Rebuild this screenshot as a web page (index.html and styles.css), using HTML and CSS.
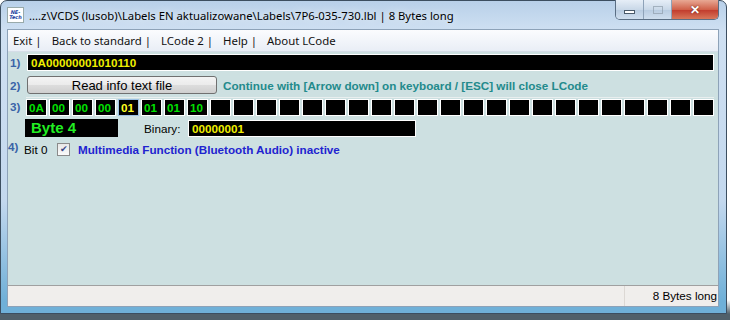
FILE: index.html
```html
<!DOCTYPE html>
<html lang="en">
<head>
    <meta charset="UTF-8">
    <title>LCode</title>
    <link rel="stylesheet" href="styles.css">
</head>
<body>
    <div class="window">
        <div class="titlebar">
            <div class="appicon"><span>NE-</span><span>Tech</span></div>
            <div class="title">....z\VCDS (lusob)\Labels EN aktualizowane\Labels\7P6-035-730.lbl | 8 Bytes long</div>
            <div class="captions">
                <div class="cap cap-min"><i></i></div>
                <div class="cap cap-max"><i></i></div>
                <div class="cap cap-close">&#x2715;</div>
            </div>
        </div>
        <div class="client">
            <div class="menubar">
                <span>Exit |</span>
                <span>Back to standard |</span>
                <span>LCode 2 |</span>
                <span>Help |</span>
                <span>About LCode</span>
            </div>
            <div class="content">
                <div class="row row1">
                    <span class="num">1)</span>
                    <div class="field wide">0A00000001010110</div>
                </div>
                <div class="row row2">
                    <span class="num">2)</span>
                    <button class="btn">Read info text file</button>
                    <span class="hint">Continue with [Arrow down] on keyboard / [ESC] will close LCode</span>
                </div>
                <div class="row row3">
                    <span class="num">3)</span>
                    <div class="cells" id="cells"></div>
                </div>
                <div class="row row-byte">
                    <div class="field bytebox">Byte 4</div>
                    <span class="binlabel">Binary:</span>
                    <div class="field binbox">00000001</div>
                </div>
                <div class="row row4">
                    <span class="num sup">4)</span>
                    <span class="bit">Bit 0</span>
                    <span class="check">&#x2714;</span>
                    <span class="desc">Multimedia Function (Bluetooth Audio) inactive</span>
                </div>
            </div>
            <div class="statusbar">
                <div class="status-left"></div>
                <div class="status-right">8 Bytes long</div>
            </div>
        </div>
    </div>

    <script>
        let bytes = ["0A", "00", "00", "00", "01", "01", "01", "10"];
        let cells = document.querySelector("#cells");
        for (let i = 0; i < 30; i++) {
            let cell = document.createElement("div");
            cell.className = "cell";
            if (i < bytes.length) cell.innerText = bytes[i];
            if (i === 4) cell.classList.add("selected");
            cells.appendChild(cell);
        }
    </script>
</body>
</html>
```

FILE: styles.css
```css
body {
    margin: 0;
    width: 730px;
    height: 320px;
    background: linear-gradient(#ffffff 0, #ffffff 300px, #50606a 314px);
    overflow: hidden;
    font-family: "Liberation Sans", Arial, sans-serif;
}
.window {
    width: 727px;
    height: 314px;
    box-sizing: border-box;
    border: 1px solid #3c4e60;
    border-radius: 7px 7px 0 0;
    padding: 0 7px 6px 6px;
    background: linear-gradient(#b8d0e9 0, #cfe0f2 30px, #c3d8ee 200px, #6fb0d8 300px);
    display: flex;
    flex-direction: column;
}
.titlebar {
    height: 28px;
    display: flex;
    align-items: center;
    position: relative;
}
.appicon {
    width: 15px;
    height: 14px;
    background: #fff;
    border: 1px solid #9aa;
    display: flex;
    flex-direction: column;
    justify-content: center;
    font-family: "DejaVu Sans", sans-serif;
    font-size: 5px;
    font-weight: bold;
    font-style: italic;
    line-height: 5px;
    color: #1b3fa0;
    text-align: center;
}
.title {
    margin-left: 5px;
    font-family: "Noto Sans", sans-serif;
    font-size: 11.3px;
    color: #000;
    text-shadow: 0 0 8px #fff;
}
.captions {
    position: absolute;
    top: -1px;
    right: 0;
    display: flex;
    border: 1px solid #5a6e84;
    border-top: none;
    border-radius: 0 0 5px 5px;
    overflow: hidden;
}
.cap {
    height: 19px;
    display: flex;
    align-items: center;
    justify-content: center;
}
.cap-min, .cap-max {
    width: 27px;
    background: linear-gradient(#e6eef7, #c9d8e8 50%, #b7cbe0 51%, #cfdeee);
    border-right: 1px solid #8ea2b8;
}
.cap-min i {
    width: 9px;
    height: 2px;
    margin-top: 5px;
    background: #fff;
    border: 1px solid #4a5a6a;
}
.cap-max i {
    width: 8px;
    height: 6px;
    border: 1px solid #8e9cab;
    opacity: 0.7;
}
.cap-close {
    width: 46px;
    background: linear-gradient(#e8a894, #d0614a 50%, #c0392b 51%, #d8775a);
    color: #fff;
    font-size: 12px;
    font-weight: bold;
    text-shadow: 0 0 2px #5a1a10;
}
.client {
    flex: 1;
    display: flex;
    flex-direction: column;
    border: 1px solid #8da2b8;
    background: #cde0e1;
}
.menubar {
    height: 21px;
    display: flex;
    align-items: center;
    gap: 10px;
    padding-left: 5px;
    background: linear-gradient(#fbfcfe, #e9eef6);
    border-bottom: 1px solid #d5dde7;
    font-family: "Noto Sans", sans-serif;
    font-size: 11.4px;
    color: #111;
}
.content {
    flex: 1;
    padding: 2px 4px 0 2px;
}
.row {
    display: flex;
    align-items: center;
}
.num {
    width: 17px;
    font-size: 11.7px;
    font-weight: bold;
    color: #3a64a8;
}
.field {
    background: #000;
    box-sizing: border-box;
    border: 1px solid #fff;
    font-weight: bold;
    font-size: 11.7px;
    padding-left: 3px;
}
.wide {
    flex: 1;
    height: 17px;
    line-height: 15px;
    color: #f0f000;
}
.row2 {
    margin-top: 5px;
}
.btn {
    width: 190px;
    height: 18px;
    padding: 0;
    border: 1px solid #707070;
    border-radius: 3px;
    background: linear-gradient(#f4f4f4, #ebebeb 50%, #dddddd 51%, #cfcfcf);
    font-family: "Liberation Sans", Arial, sans-serif;
    font-size: 13px;
    color: #000;
}
.hint {
    margin-left: 6px;
    font-size: 11.7px;
    font-weight: bold;
    color: #238a8c;
}
.row3 {
    margin-top: 3px;
}
.cells {
    display: flex;
    gap: 2px;
    padding-top: 1px;
    border-top: 1px solid #e8eeee;
}
.cell {
    width: 21px;
    height: 17px;
    box-sizing: border-box;
    background: #000;
    border: 1px solid #fff;
    color: #00e000;
    font-size: 11.7px;
    font-weight: bold;
    line-height: 15px;
    padding-left: 2px;
}
.cell.selected {
    color: #ffff20;
    border-color: #9cc0e4;
}
.row-byte {
    margin-top: 3px;
    padding-left: 15px;
}
.bytebox {
    width: 93px;
    height: 18px;
    line-height: 16px;
    font-size: 15px;
    color: #22ee22;
    padding-left: 5px;
    border-color: #000;
}
.binlabel {
    margin-left: 26px;
    width: 44px;
    font-size: 11.7px;
    color: #000;
}
.binbox {
    width: 228px;
    height: 17px;
    line-height: 15px;
    color: #f0f000;
}
.row4 {
    margin-top: 6px;
}
.sup {
    width: 16px;
    align-self: flex-start;
    margin-top: -3px;
    margin-left: -2px;
}
.bit {
    font-size: 11.7px;
    color: #000;
    width: 33px;
}
.check {
    width: 11px;
    height: 11px;
    border: 1px solid #8a8a8a;
    background: linear-gradient(#e8e8e8, #fafafa);
    font-size: 9px;
    line-height: 11px;
    text-align: center;
    color: #3a4a8a;
}
.desc {
    margin-left: 8px;
    font-size: 11.7px;
    font-weight: bold;
    color: #1f24d0;
}
.statusbar {
    height: 20px;
    display: flex;
    border-top: 1px solid #a0a0a0;
    background: #f0eeec;
    font-size: 11.7px;
    color: #000;
}
.status-left {
    flex: 1;
}
.status-right {
    width: 92px;
    border-left: 1px solid #dcd8d4;
    text-align: right;
    line-height: 19px;
    padding-right: 1px;
}
```
